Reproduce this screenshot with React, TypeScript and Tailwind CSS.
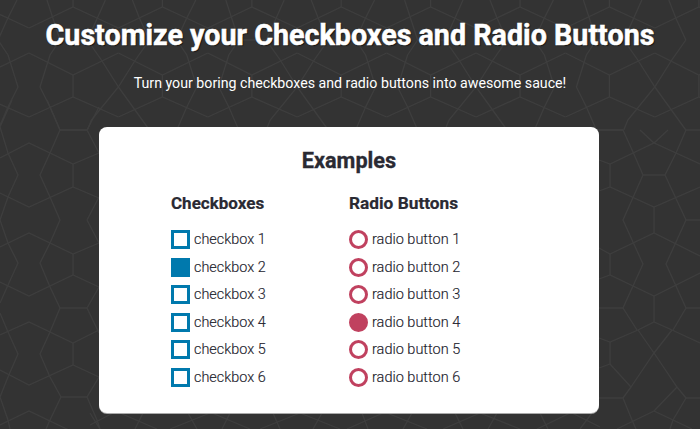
const P = 89.4;
const tile: string[] = [];
// periodic band above the card, traced from the visible columns
for (let k = -1; k < 8; k++) {
  const x = (v: number) => +(v + k * P).toFixed(1);
  const pt = (a: number, b: number) => `${x(a)},${b}`;
  // three zigzag rows
  tile.push([pt(29, 28), pt(73, 7), pt(118.4, 28)].join(" "));
  tile.push([pt(29, 53), pt(73, 75), pt(118.4, 53)].join(" "));
  tile.push([pt(29, 117), pt(73, 97), pt(118.4, 117)].join(" "));
  tile.push([pt(73, 0), pt(73, 7)].join(" "));
  tile.push([pt(73, 75), pt(73, 97)].join(" "));
  if (Math.abs(k) % 2 === 0) {
    // waist column around 29 + 2n*P
    tile.push([pt(17, 0), pt(7, 20), pt(-2, 40), pt(8, 55), pt(18, 87), pt(8, 107), pt(-2, 130)].join(" "));
    tile.push([pt(47, 0), pt(60, 40), pt(50, 55), pt(40, 87), pt(50, 107), pt(60, 130)].join(" "));
    tile.push([pt(-2, 40), pt(-29, 40)].join(" "));
    tile.push([pt(-2, 130), pt(-29, 130)].join(" "));
    tile.push([pt(60, 40), pt(87, 40)].join(" "));
    tile.push([pt(60, 130), pt(87, 130)].join(" "));
  } else {
    // crossing column around 118 + 2n*P
    tile.push([pt(16, 0), pt(8, 18), pt(-2, 40), pt(12, 60), pt(29, 87), pt(2, 120), pt(-2, 130)].join(" "));
    tile.push([pt(43, 0), pt(50, 18), pt(60, 40), pt(46, 60), pt(29, 87), pt(60, 130)].join(" "));
  }
}

const traced = [
  // left band
  "47,100 60,130 50,153 40,175 50,197 60,220 50,243 40,263 50,287 60,308 50,332 40,354 50,377 61,397 50,420 46,429",
  "12,100 0,127",
  "0,127 8,153 18,175 8,197 0,220 8,243 18,263 8,285 0,303",
  "0,313 8,332 18,354 8,377 0,397 8,420 10,429",
  "87,130 99,153",
  "87,130 99,107",
  "87,220 99,197",
  "87,220 99,243",
  "87,308 99,287",
  "87,308 99,333",
  "87,397 99,377",
  "87,397 97,420 100,429",
  "60,130 87,130",
  "60,308 87,308",
  "60,397 87,397",
  "0,158 29,143 73,164 99,153",
  "0,193 29,207 73,187 99,198",
  "0,247 29,233 73,254 99,243",
  "0,282 29,296 73,275 99,287",
  "0,335 29,322 73,343 99,330",
  "0,370 29,385 73,365 99,377",
  "0,425 29,411 73,432",
  "73,164 73,187",
  "73,254 73,275",
  "73,343 73,365",
  // right band
  "599,160 610,164 654,143 700,164",
  "610,164 610,187",
  "599,191 610,187 654,207 700,187",
  "640,130 654,143 668,130",
  "623,130 633,152 643,175 623,220 643,264 623,308 637,330",
  "686,130 676,153 665,175 686,220 666,264 686,308 673,330",
  "643,175 665,175",
  "654,207 654,233",
  "686,220 700,220",
  "599,248 610,254 654,233 700,256",
  "610,254 610,275",
  "599,279 610,275 654,296 700,273",
  "654,296 654,322",
  "599,308 623,308",
  "686,308 700,308",
  "599,338 610,342 638,330 654,322 672,330 700,343",
  "610,342 610,364",
  "599,368 610,364 631,387 623,398 599,398",
  "638,330 654,353 677,387 686,398 700,398",
  "672,330 654,353 631,387",
  "677,387 654,411 623,426 617,429",
  "654,411 673,420 692,429",
  "623,398 632,420 636,429",
  "686,398 673,420 670,429",
  "599,130 623,130",
  "686,130 700,130",
  // bottom band
  "90,413 100,429",
  "113,413 90,425",
  "120,413 157,429",
  "143,413 135,429",
  "210,413 170,429",
  "188,413 197,429",
  "212,413 250,429",
  "230,413 222,429",
  "273,413 280,429",
  "300,413 260,429",
  "300,413 340,429",
  "322,413 313,429",
  "362,413 368,429",
  "383,413 347,429",
  "412,413 403,429",
  "387,413 427,429",
  "455,413 463,429",
  "480,413 443,429",
  "497,413 488,429",
  "480,413 520,429",
  "540,413 548,429",
  "570,413 537,429",
  "572,413 600,427",
  "592,413 580,429",
];

const rows = [1, 2, 3, 4, 5, 6];

function Background() {
  return (
    <svg className="absolute inset-0" width="700" height="429" viewBox="0 0 700 429" fill="none" stroke="#3e3e3e" strokeWidth="1.3">
      {[...tile, ...traced].map((p, i) => (
        <polyline key={i} points={p} />
      ))}
    </svg>
  );
}

export default function App() {
  return (
    <div className="relative h-[429px] w-[700px] overflow-hidden bg-[#333333] font-['Roboto',sans-serif]">
      <Background />
      <div className="relative flex flex-col items-center">
        <h1 className="mt-[16px] text-[28.7px] leading-[38px] font-bold whitespace-nowrap text-white [-webkit-text-stroke:0.5px_white] [text-shadow:1px_1px_1px_#111]">
          Customize your Checkboxes and Radio Buttons
        </h1>
        <p className="mt-[19px] text-[14.2px] leading-[20px] font-normal whitespace-nowrap text-white">
          Turn your boring checkboxes and radio buttons into awesome sauce!
        </p>
        <div className="mt-[34px] mr-[2px] flex h-[286px] w-[500px] flex-col rounded-[8px] bg-white pt-[20px] text-[#2a2a33] shadow-[0_1px_0_#aaa]">
          <h2 className="text-center text-[21.7px] leading-[28px] font-bold [-webkit-text-stroke:0.3px_#2a2a33]">Examples</h2>
          <div className="mt-[17px] flex pl-[72px]">
            <div className="w-[178px]">
              <h3 className="text-[17px] leading-[22px] font-bold [-webkit-text-stroke:0.2px_#2a2a33]">Checkboxes</h3>
              <ul className="mt-[16px] flex flex-col gap-[8.6px]">
                {rows.map((n) => (
                  <li key={n} className="flex h-[19px] items-center gap-[4px] text-[14.4px] leading-[19px] font-light text-[#22222c] [-webkit-text-stroke:0.15px_#22222c]">
                    <span className={`h-[19px] w-[19px] border-[3px] border-[#0079ad] ${n === 2 ? "bg-[#0079ad]" : "bg-white"}`} />
                    checkbox {n}
                  </li>
                ))}
              </ul>
            </div>
            <div>
              <h3 className="text-[17.3px] leading-[22px] font-bold [-webkit-text-stroke:0.2px_#2a2a33]">Radio Buttons</h3>
              <ul className="mt-[16px] flex flex-col gap-[8.6px]">
                {rows.map((n) => (
                  <li key={n} className="flex h-[19px] items-center gap-[4px] text-[14.5px] leading-[19px] font-light text-[#22222c] [-webkit-text-stroke:0.15px_#22222c]">
                    <span className={`h-[19px] w-[19px] rounded-full border-[3px] border-[#c0415f] ${n === 4 ? "bg-[#c0415f]" : "bg-white"}`} />
                    radio button {n}
                  </li>
                ))}
              </ul>
            </div>
          </div>
        </div>
      </div>
    </div>
  );
}
